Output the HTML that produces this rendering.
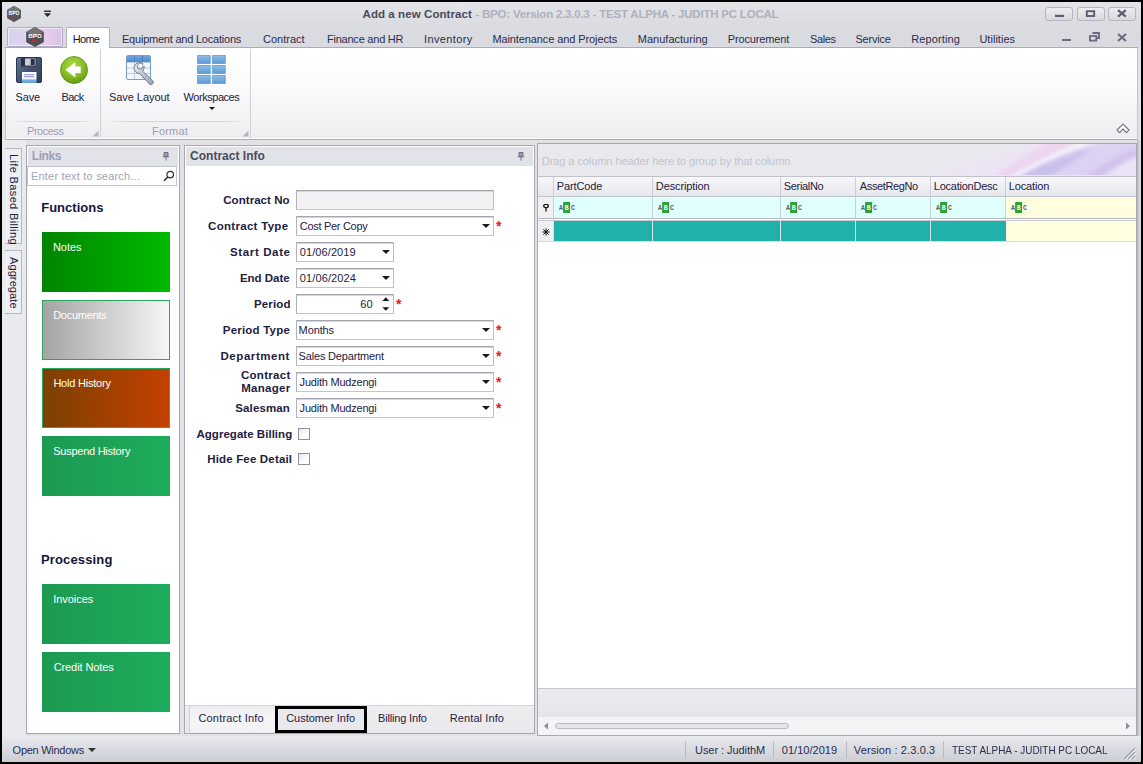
<!DOCTYPE html>
<html>
<head>
<meta charset="utf-8">
<title>Add a new Contract</title>
<style>
*{box-sizing:border-box;margin:0;padding:0}
html,body{width:1143px;height:764px;overflow:hidden;background:#e1e2e6}
body{font-family:"Liberation Sans",sans-serif;font-size:11px;color:#1e2140;position:relative}
.abs{position:absolute}
span,div{white-space:nowrap}
#frame{position:absolute;left:0;top:0;width:1143px;height:764px;box-shadow:inset 0 0 0 2px #000;z-index:99}
/* title bar */
#title{position:absolute;left:2px;top:2px;width:1139px;height:25px;background:linear-gradient(#e3e4e8,#dadbe0)}
#title .cap{position:absolute;top:6px;font-size:11.5px;font-weight:bold;color:#aeb0be}
.wbtn{position:absolute;top:5px;width:28px;height:14px;border:1px solid #b4b5be;border-radius:3px;background:linear-gradient(#ededf1,#d8d9de)}
/* tab row */
#tabs{position:absolute;left:2px;top:27px;width:1139px;height:21px;background:#dadbe0}
#tabs span{position:absolute;top:6px;color:#2a2d4c;font-size:11px}
#tabline{position:absolute;left:5px;top:47px;width:1133px;height:1px;background:#a9abb6}
#appbtn{position:absolute;left:7px;top:27px;width:56px;height:20px;border:1px solid #b0aec2;border-radius:2px;box-shadow:inset 0 0 0 1px rgba(255,255,255,.55);background:linear-gradient(90deg,#d6d2ee 0%,#e2d4ee 45%,#e6cdea 70%,#d9c4e8 100%)}
#hometab{position:absolute;left:66px;top:27px;width:44px;height:22px;background:#fff;border:1px solid #b0b2bd;border-bottom:none;border-radius:2px 2px 0 0}
/* ribbon */
#ribbon{position:absolute;left:5px;top:48px;width:1133px;height:92px;background:linear-gradient(#ffffff 0%,#fcfcfd 35%,#eeeef2 100%);border:1px solid #a9abb6;border-left-color:#c4c6ce;border-right-color:#c4c6ce;border-top:none;box-shadow:inset 0 -1px 0 #fff}
.rsep{position:absolute;top:49px;width:1px;height:89px;background:#cfd0d8}
.rlbl{position:absolute;top:91px;font-size:11px;color:#1e2140}
.gcap{position:absolute;top:125px;font-size:11px;color:#9c9eb0}
/* workspace */
.panel{position:absolute;border:1px solid #a6a8b6;background:#fff}
.phead{position:absolute;background:#e2e3e8;font-weight:bold;font-size:12px;letter-spacing:.1px}
.tile{position:absolute;left:42px;width:128px;height:60px;color:#fff;font-size:11px}
.tile span{position:absolute;left:11px;top:9px}
.flbl{position:absolute;right:853px;font-weight:bold;font-size:11.5px;letter-spacing:.2px;color:#1e2140;text-align:right;line-height:13px}
.fin{position:absolute;left:296px;width:198px;height:20px;border:1px solid;border-color:#a4a6b2 #bcbec8 #c2c4ce #b0b2be;background:#fff;font-size:11px;color:#1e2140;padding:3px 0 0 3px;box-shadow:inset 0 1px 0 #d4d5dc}
.dd{position:absolute;width:0;height:0;border-left:4px solid transparent;border-right:4px solid transparent;border-top:4px solid #1a1a1a}
.req{position:absolute;color:#f0141e;font-weight:bold;font-size:14px;line-height:14px}
.cb{position:absolute;left:298px;width:12px;height:12px;border:1px solid #8e90a0;background:linear-gradient(135deg,#e6e6ea,#fff 60%)}
/* grid */
.gh{position:absolute;top:177px;height:20px;border-right:1px solid #cdcfd8;border-bottom:1px solid #c0c2cc;background:linear-gradient(#f8f8fa,#e6e7ec);font-size:11px;padding:3px 0 0 4px;color:#1e2140}
.gf{position:absolute;top:197px;height:21px;border-right:1px solid #c6d4d8;background:#e0ffff}
.gn{position:absolute;top:221px;height:20px;border-right:1px solid #d8e8e8;background:#20b2aa}
.abc{position:absolute;top:5px;left:5px}
/* status */
#status{position:absolute;left:2px;top:736px;width:1139px;height:26px;background:linear-gradient(#e9eaed,#dcdde2 45%,#cdced4);font-size:11px;color:#2a2d4c}
#status span{position:absolute;top:8px}
#status i{position:absolute;top:5px;width:1px;height:17px;background:#b8bac4}
</style>
</head>
<body>
<!-- TITLE -->
<div id="title">
  <span class="cap" style="left:360.5px;color:#4a4b5c;letter-spacing:.08px">Add a new Contract</span><span class="cap" style="left:473.4px;letter-spacing:-0.21px">- BPO: Version 2.3.0.3 - TEST ALPHA - JUDITH PC LOCAL</span>
  <div class="wbtn" style="left:1043px"></div>
  <div class="wbtn" style="left:1075px"></div>
  <div class="wbtn" style="left:1106px"></div>
</div>
<!-- TABS -->
<div id="tabs">
  <span style="left:120.0px;letter-spacing:-0.22px">Equipment and Locations</span>
  <span style="left:261px">Contract</span>
  <span style="left:325.0px;letter-spacing:-0.23px">Finance and HR</span>
  <span style="left:422.0px;letter-spacing:0.39px">Inventory</span>
  <span style="left:490.4px;letter-spacing:-0.1px">Maintenance and Projects</span>
  <span style="left:635.8px;letter-spacing:0.01px">Manufacturing</span>
  <span style="left:725.8px;letter-spacing:-0.15px">Procurement</span>
  <span style="left:808.0px;letter-spacing:-0.37px">Sales</span>
  <span style="left:853.4px;letter-spacing:-0.18px">Service</span>
  <span style="left:909.2px;letter-spacing:0.12px">Reporting</span>
  <span style="left:977.4px;letter-spacing:0.03px">Utilities</span>
</div>
<div id="tabline"></div>
<div id="appbtn"></div>
<div id="hometab"></div>
<span class="abs" style="left:72.8px;top:33px;color:#14163a;font-size:11px;letter-spacing:-0.73px">Home</span>
<!-- RIBBON -->
<div id="ribbon"></div>
<div class="rsep" style="left:100px"></div>
<div class="rsep" style="left:250px"></div>
<span class="rlbl" style="left:15.6px;letter-spacing:-0.18px">Save</span>
<span class="rlbl" style="left:61.4px;letter-spacing:-0.54px">Back</span>
<span class="rlbl" style="left:109.0px;letter-spacing:-0.06px">Save Layout</span>
<span class="rlbl" style="left:183.6px;letter-spacing:-0.46px">Workspaces</span>
<div class="dd" style="left:208.5px;top:107px;border-left-width:3px;border-right-width:3px;border-top-width:3.5px"></div>
<span class="gcap" style="left:27.0px;letter-spacing:-0.46px">Process</span>
<span class="gcap" style="left:152.0px;letter-spacing:0.18px">Format</span>
<!-- save icon -->
<svg class="abs" style="left:16px;top:57px" width="26" height="26" viewBox="0 0 26 26">
  <defs><linearGradient id="sv1" x1="0" y1="0" x2="1" y2="1"><stop offset="0" stop-color="#62799c"/><stop offset=".5" stop-color="#42536f"/><stop offset="1" stop-color="#303c56"/></linearGradient>
  <linearGradient id="sv2" x1="0" y1="0" x2="0" y2="1"><stop offset="0" stop-color="#ffffff"/><stop offset=".65" stop-color="#f2f6fb"/><stop offset=".7" stop-color="#7fb6e2"/><stop offset="1" stop-color="#5aa0d8"/></linearGradient></defs>
  <rect x="0.5" y="0.5" width="25" height="25" rx="1.5" fill="url(#sv1)" stroke="#2a3650"/>
  <rect x="5" y="0.5" width="15.5" height="9" fill="#2b3046"/>
  <rect x="9" y="1.5" width="10.5" height="7" fill="#c9d0dc"/>
  <rect x="14.7" y="2" width="4" height="6" fill="#2b3046"/>
  <rect x="6" y="15" width="14.5" height="11" fill="url(#sv2)"/>
  <rect x="8" y="17.2" width="10" height="1" fill="#8c8cd0"/><rect x="8" y="19.2" width="10" height="1" fill="#8c8cd0"/>
</svg>
<!-- back icon -->
<svg class="abs" style="left:60px;top:56px" width="28" height="28" viewBox="0 0 28 28">
  <defs><radialGradient id="bk1" cx=".45" cy=".3" r=".75"><stop offset="0" stop-color="#a6d63a"/><stop offset=".6" stop-color="#86bc22"/><stop offset="1" stop-color="#5f9414"/></radialGradient></defs>
  <circle cx="14" cy="14" r="13.5" fill="url(#bk1)" stroke="#5c8c18" stroke-width=".8"/>
  <path d="M5.5 13.8 L15.2 6.4 L15.2 10.6 L20.6 10.6 L20.6 17 L15.2 17 L15.2 21.2 Z" fill="#fff" stroke="#e8f2d0" stroke-width=".5"/>
</svg>
<!-- save layout icon -->
<svg class="abs" style="left:126px;top:55px" width="30" height="30" viewBox="0 0 30 30">
  <defs><linearGradient id="sl1" x1="0" y1="0" x2="0" y2="1"><stop offset="0" stop-color="#6ea6dc"/><stop offset="1" stop-color="#4d8ccc"/></linearGradient>
  <linearGradient id="sl2" x1="0" y1="0" x2="1" y2="1"><stop offset="0" stop-color="#e8ebf0"/><stop offset="1" stop-color="#9aa3b2"/></linearGradient></defs>
  <rect x="0.5" y="0.5" width="24" height="24" rx="1.5" fill="#f3f7fc" stroke="#7a9acc"/>
  <rect x="1" y="1" width="23" height="6" fill="url(#sl1)"/>
  <path d="M8.5 1 V24 M16.5 1 V24 M1 7.5 H24 M1 13 H24 M1 18.5 H24" stroke="#b8cce6" stroke-width="1" fill="none"/>
  <path d="M8.5 1 V7 M16.5 1 V7" stroke="#4a80c0" stroke-width="1"/>
  <g transform="translate(-1.2,-0.6) scale(1.08)"><path d="M17 9 a5 5 0 1 0 -3.2 8.6 l8.8 9.6 a2 2 0 0 0 3.2 -2.8 l-9.4 -9 a5 5 0 0 0 1.4 -4.6 l-2.8 2.8 l-2.8 -0.8 l-0.6 -2.6 l2.6 -2.6 z" fill="url(#sl2)" stroke="#6f7a8e" stroke-width=".9"/></g>
</svg>
<!-- workspaces icon -->
<svg class="abs" style="left:197px;top:55px" width="29" height="29" viewBox="0 0 29 29">
  <defs><linearGradient id="ws1" x1="0" y1="0" x2="0" y2="1"><stop offset="0" stop-color="#8fbde8"/><stop offset="1" stop-color="#5c9bd6"/></linearGradient></defs>
  <g fill="url(#ws1)" stroke="#5a98d4" stroke-width=".8">
  <rect x="0.6" y="0.6" width="12.6" height="7.8"/><rect x="15.6" y="0.6" width="12.6" height="7.8"/>
  <rect x="0.6" y="10.6" width="12.6" height="7.8"/><rect x="15.6" y="10.6" width="12.6" height="7.8"/>
  <rect x="0.6" y="20.6" width="12.6" height="7.8"/><rect x="15.6" y="20.6" width="12.6" height="7.8"/></g>
</svg>
<div class="abs" style="left:10px;top:121px;width:86px;height:1px;background:linear-gradient(90deg,rgba(214,215,222,0),#d6d7de 20%,#d6d7de 80%,rgba(214,215,222,0))"></div>
<div class="abs" style="left:105px;top:121px;width:141px;height:1px;background:linear-gradient(90deg,rgba(214,215,222,0),#d6d7de 15%,#d6d7de 85%,rgba(214,215,222,0))"></div>
<!-- group corner marks -->
<svg class="abs" style="left:92px;top:130px" width="7" height="7" viewBox="0 0 7 7"><path d="M6.5 0.5 V6.5 H0.5 Z" fill="#b4b6c2"/></svg>
<svg class="abs" style="left:242px;top:130px" width="7" height="7" viewBox="0 0 7 7"><path d="M6.5 0.5 V6.5 H0.5 Z" fill="#b4b6c2"/></svg>
<!-- ribbon collapse -->
<svg class="abs" style="left:1116px;top:123px" width="14" height="11" viewBox="0 0 14 11"><path d="M7 1.2 L13 7 L10.5 9.6 L7 6 L3.5 9.6 L1 7 Z" fill="#fff" stroke="#6c6e7e" stroke-width="1.1" stroke-linejoin="round"/></svg>
<!-- title logo -->
<svg class="abs" style="left:7px;top:6px" width="14" height="16" viewBox="0 0 14 16">
  <path d="M7 0.3 L13.6 4 L13.6 12 L7 15.7 L0.4 12 L0.4 4 Z" fill="#58585c" stroke="#3c3c40" stroke-width=".6"/>
  <path d="M7 0.3 L13.6 4 L7 7.5 L0.4 4 Z" fill="#77777c"/>
  <text x="7" y="9.2" text-anchor="middle" font-family="Liberation Sans, sans-serif" font-size="5" font-weight="bold" fill="#fff">BPO</text>
  <rect x="5" y="10.6" width="2.4" height="1.6" fill="#c03038"/>
</svg>
<svg class="abs" style="left:43px;top:10px" width="9" height="8" viewBox="0 0 9 8"><rect x="1" y="0.6" width="7" height="1.3" fill="#1e2030"/><path d="M1 3.2 H8 L4.5 7 Z" fill="#1e2030"/></svg>
<!-- app button logo -->
<svg class="abs" style="left:26px;top:27px" width="18" height="20" viewBox="0 0 18 20">
  <path d="M9 0.4 L17.4 5 L17.4 15 L9 19.6 L0.6 15 L0.6 5 Z" fill="#505054" stroke="#38383c" stroke-width=".6"/>
  <path d="M9 0.4 L17.4 5 L9 9.4 L0.6 5 Z" fill="#737378"/>
  <text x="9" y="11.4" text-anchor="middle" font-family="Liberation Sans, sans-serif" font-size="6.2" font-weight="bold" fill="#fff">BPO</text>
  <rect x="6" y="13" width="3.2" height="2" fill="#c03038"/>
</svg>
<!-- window button glyphs -->
<svg class="abs" style="left:1045px;top:7px" width="92" height="14" viewBox="0 0 92 14">
  <rect x="10" y="7.8" width="9" height="2.2" fill="#5c5d70"/>
  <rect x="41.8" y="4.2" width="7.4" height="4.8" fill="none" stroke="#5c5d70" stroke-width="1.9"/>
  <path d="M73 3.2 L80.8 9.6 M80.8 3.2 L73 9.6" stroke="#5c5d70" stroke-width="2.2"/>
</svg>
<svg class="abs" style="left:1058px;top:31px" width="72" height="12" viewBox="0 0 72 12">
  <rect x="4" y="8" width="9" height="2" fill="#6a6b7e"/>
  <path d="M34.5 2 H41 V7 H39" fill="none" stroke="#6a6b7e" stroke-width="1.8"/>
  <rect x="31.9" y="5" width="6.4" height="4.6" fill="none" stroke="#6a6b7e" stroke-width="1.8"/>
  <path d="M60 3 L68 10 M68 3 L60 10" stroke="#6a6b7e" stroke-width="2.1"/>
</svg>

<!-- SIDE TABS -->
<div class="abs" style="left:2px;top:140px;width:24px;height:596px;background:#e9eaed"></div>
<div class="abs" style="left:5px;top:148px;width:17px;height:96px;background:#eeeff2;border:1px solid #b6b8c4;border-left:none"></div>
<div class="abs" style="left:5px;top:250px;width:17px;height:64px;background:#eeeff2;border:1px solid #b6b8c4;border-left:none"></div>
<div class="abs" style="left:20px;top:154px;width:0;height:0"><span class="abs" style="left:0;top:0;transform-origin:0 0;transform:rotate(90deg);font-size:11px;color:#1e2140;letter-spacing:.36px">Life Based Billing</span></div>
<div class="abs" style="left:20px;top:257px;width:0;height:0"><span class="abs" style="left:0;top:0;transform-origin:0 0;transform:rotate(90deg);font-size:11px;color:#1e2140;letter-spacing:.1px">Aggregate</span></div>

<!-- LINKS PANEL -->
<div class="panel" style="left:26px;top:145px;width:154px;height:589px"></div>
<div class="phead" style="left:28px;top:147px;width:150px;height:19px"><span class="abs" style="left:3.8px;top:2px;color:#9a9eb6;letter-spacing:-0.43px">Links</span></div>
<div class="abs" style="left:27.0px;top:166px;width:150px;height:20px;border:1px solid #c2c4ce;background:#fff;color:#a2a4b6;padding:3px 0 0 3px;letter-spacing:0.2px">Enter text to search...</div>
<div class="abs" style="left:41.2px;top:200px;font-weight:bold;font-size:13px;color:#14163a;letter-spacing:0.02px">Functions</div>
<div class="tile" style="top:232px;background:linear-gradient(90deg,#008400,#00bc00)"><span style="letter-spacing:-0.07px;text-indent:0.0px">Notes</span></div>
<div class="tile" style="top:300px;background:linear-gradient(90deg,#a4a4a4,#f6f6f6);border:1px solid #2aa860"><span style="left:10.2px;top:8px;letter-spacing:-0.28px">Documents</span></div>
<div class="tile" style="top:368px;background:linear-gradient(90deg,#7c4000,#c44000);border:1px solid #2aa860"><span style="left:10.4px;top:8px;letter-spacing:-0.21px">Hold History</span></div>
<div class="tile" style="top:436px;background:linear-gradient(90deg,#1c9a52,#1eac5c)"><span style="letter-spacing:-0.25px;text-indent:0.2px">Suspend History</span></div>
<div class="abs" style="left:41.0px;top:552px;font-weight:bold;font-size:13px;color:#14163a;letter-spacing:0.14px">Processing</div>
<div class="tile" style="top:584px;background:linear-gradient(90deg,#1c9a52,#1eac5c)"><span style="letter-spacing:-0.04px;text-indent:0.2px">Invoices</span></div>
<div class="tile" style="top:652px;background:linear-gradient(90deg,#1c9a52,#1eac5c)"><span style="letter-spacing:-0.1px;text-indent:0.7px">Credit Notes</span></div>

<!-- CONTRACT INFO PANEL -->
<div class="panel" style="left:184px;top:145px;width:351px;height:589px"></div>
<div class="phead" style="left:186px;top:147px;width:347px;height:19px"><span class="abs" style="left:4.0px;top:2px;color:#4a4b5c;letter-spacing:0.02px">Contract Info</span></div>
<div class="flbl" style="top:194px;letter-spacing:0.05px;right:853.4px">Contract No</div>
<div class="fin" style="top:190px;background:#f2f2f5"></div>
<div class="flbl" style="top:220px;letter-spacing:0.3px;right:854.6px">Contract Type</div>
<div class="fin" style="top:216px;letter-spacing:-0.3px;text-indent:-0.2px">Cost Per Copy</div><div class="dd" style="left:482px;top:224px"></div><div class="req" style="left:496px;top:219px">*</div>
<div class="flbl" style="top:246px;letter-spacing:0.62px;right:852.4px">Start Date</div>
<div class="fin" style="top:242px;width:98px;letter-spacing:0.08px;text-indent:-0.2px">01/06/2019</div><div class="dd" style="left:382px;top:250px"></div>
<div class="flbl" style="top:272px;letter-spacing:-0.02px;right:853.4px">End Date</div>
<div class="fin" style="top:268px;width:98px;letter-spacing:0.12px;text-indent:-0.2px">01/06/2024</div><div class="dd" style="left:382px;top:276px"></div>
<div class="flbl" style="top:298px;letter-spacing:0.14px;right:852.4px">Period</div>
<div class="fin" style="top:294px;width:98px;text-align:right;padding-right:20.4px;letter-spacing:0.0px">60</div>
<svg class="abs" style="left:382px;top:296px" width="8" height="16" viewBox="0 0 8 16"><path d="M0.3 5 L3.8 1.3 L7.3 5 Z M0.3 11.2 L3.8 14.8 L7.3 11.2 Z" fill="#1a1a1a"/></svg>
<div class="req" style="left:396px;top:297px">*</div>
<div class="flbl" style="top:324px;letter-spacing:0.2px;right:853.0px">Period Type</div>
<div class="fin" style="top:320px;letter-spacing:-0.12px;text-indent:-1.4px">Months</div><div class="dd" style="left:482px;top:328px"></div><div class="req" style="left:496px;top:323px">*</div>
<div class="flbl" style="top:350px;letter-spacing:0.56px;right:853.0px">Department</div>
<div class="fin" style="top:346px;letter-spacing:-0.18px;text-indent:-1.4px">Sales Department</div><div class="dd" style="left:482px;top:354px"></div><div class="req" style="left:496px;top:349px">*</div>
<div class="flbl" style="top:369px;letter-spacing:.3px;right:852.4px">Contract<br>Manager</div>
<div class="fin" style="top:372px;letter-spacing:-0.22px;text-indent:-0.4px">Judith Mudzengi</div><div class="dd" style="left:482px;top:380px"></div><div class="req" style="left:496px;top:375px">*</div>
<div class="flbl" style="top:402px;letter-spacing:0.13px;right:853.0px">Salesman</div>
<div class="fin" style="top:398px;letter-spacing:-0.22px;text-indent:-0.4px">Judith Mudzengi</div><div class="dd" style="left:482px;top:406px"></div><div class="req" style="left:496px;top:401px">*</div>
<div class="flbl" style="top:428px;right:850.8px;letter-spacing:0.03px">Aggregate Billing</div>
<div class="cb" style="top:428px"></div>
<div class="flbl" style="top:453px;right:850.8px;letter-spacing:0.17px">Hide Fee Detail</div>
<div class="cb" style="top:453px"></div>
<!-- bottom tabs -->
<div class="abs" style="left:185px;top:705px;width:349px;height:28px;background:linear-gradient(#eeeef1,#e9e9ed);border-top:1px solid #d4d5dc"></div>
<div class="abs" style="left:189px;top:706px;width:86px;height:26px;background:linear-gradient(#ececf0,#f5f5f7 40%,#f3f3f6);border-left:1px solid #cfd0d8"></div>
<div class="abs" style="left:275px;top:706px;width:92px;height:27px;border:3px solid #000;background:#e9e9ed"></div>
<span class="abs" style="left:198.4px;top:712px;color:#1e2140;letter-spacing:0.19px">Contract Info</span>
<span class="abs" style="left:286.2px;top:712px;color:#1e2140;letter-spacing:-0.02px">Customer Info</span>
<span class="abs" style="left:378.0px;top:712px;color:#1e2140;letter-spacing:-0.16px">Billing Info</span>
<span class="abs" style="left:449.8px;top:712px;color:#1e2140;letter-spacing:0.09px">Rental Info</span>

<!-- GRID PANEL -->
<div class="panel" style="left:537px;top:143px;width:600px;height:593px;background:#fff"></div>
<div class="abs" id="grp" style="left:538px;top:144px;width:598px;height:33px;background:#e9e9ed;border-bottom:1px solid #c0c2cc;overflow:hidden">
  <svg class="abs" style="left:340px;top:0" width="258" height="31" viewBox="0 0 258 31">
    <defs><filter id="bl" x="-10%" y="-30%" width="120%" height="160%"><feGaussianBlur stdDeviation="2.2"/></filter>
    <filter id="bl2" x="-10%" y="-30%" width="120%" height="160%"><feGaussianBlur stdDeviation="5"/></filter></defs>
    <path d="M40 34 C90 20 130 8 170 -4 L262 -4 L262 34 Z" fill="#ece4f4" filter="url(#bl2)"/>
    <path d="M112 34 C135 20 150 10 172 -3 L200 -3 C175 10 150 22 128 34 Z" fill="#ecd6f0" filter="url(#bl)"/>
    <path d="M132 34 C155 20 180 8 205 -3 L222 -3 C195 10 170 22 146 34 Z" fill="#f6f2fa" filter="url(#bl)"/>
    <path d="M140 34 C165 18 195 6 225 -2 L262 -2 L262 34 Z" fill="#dcd2f2" filter="url(#bl)"/>
    <path d="M140 34 C165 20 190 10 215 4 C200 14 185 24 170 34 Z" fill="#c9bfec" filter="url(#bl)"/>
    <path d="M205 34 C222 22 238 12 258 4 L262 10 C245 18 232 26 222 34 Z" fill="#d2c2ec" filter="url(#bl)"/>
    <path d="M225 34 C238 25 248 18 262 12 L262 34 Z" fill="#ebe4f6" filter="url(#bl)"/>
  </svg>
  <span class="abs" style="left:3.8px;top:11px;color:#c2c4ce;font-size:11px;letter-spacing:-0.07px">Drag a column header here to group by that column</span>
</div>
<!-- header row -->
<div class="gh" style="left:538px;width:16px"></div>
<div class="gh" style="left:554px;width:99px;letter-spacing:-0.13px;text-indent:-1.2px">PartCode</div>
<div class="gh" style="left:653px;width:128px;letter-spacing:-0.12px;text-indent:-1.2px">Description</div>
<div class="gh" style="left:781px;width:75px;letter-spacing:-0.34px;text-indent:-1.2px">SerialNo</div>
<div class="gh" style="left:856px;width:75px;letter-spacing:-0.38px;text-indent:-0.2px">AssetRegNo</div>
<div class="gh" style="left:931px;width:75px;letter-spacing:-0.24px;text-indent:-1.2px">LocationDesc</div>
<div class="gh" style="left:1006px;width:130px;border-right:none;letter-spacing:-0.16px;text-indent:-1.2px">Location</div>
<!-- filter row -->
<div class="gf" style="left:538px;width:16px;background:#f0f0f3"><svg class="abs" style="left:5px;top:7px" width="6" height="8" viewBox="0 0 6 8"><ellipse cx="3" cy="2" rx="2.3" ry="1.6" fill="#fff" stroke="#111" stroke-width="1.3"/><path d="M3 3.4 V7.6" stroke="#111" stroke-width="1.3"/></svg></div>
<div class="gf" style="left:554px;width:99px"><svg class="abc" width="16" height="11" viewBox="0 0 16 11"><rect x="4.1" y="0" width="7" height="11" rx=".6" fill="#2ea036"/><text x="0" y="8.2" font-family="Liberation Mono, monospace" font-size="6.5" font-weight="bold" fill="#5a5c66">A</text><text x="5.7" y="8.2" font-family="Liberation Mono, monospace" font-size="6.5" font-weight="bold" fill="#fff">B</text><text x="12" y="8.2" font-family="Liberation Mono, monospace" font-size="6.5" font-weight="bold" fill="#5a5c66">C</text></svg></div>
<div class="gf" style="left:653px;width:128px"><svg class="abc" width="16" height="11" viewBox="0 0 16 11"><rect x="4.1" y="0" width="7" height="11" rx=".6" fill="#2ea036"/><text x="0" y="8.2" font-family="Liberation Mono, monospace" font-size="6.5" font-weight="bold" fill="#5a5c66">A</text><text x="5.7" y="8.2" font-family="Liberation Mono, monospace" font-size="6.5" font-weight="bold" fill="#fff">B</text><text x="12" y="8.2" font-family="Liberation Mono, monospace" font-size="6.5" font-weight="bold" fill="#5a5c66">C</text></svg></div>
<div class="gf" style="left:781px;width:75px"><svg class="abc" width="16" height="11" viewBox="0 0 16 11"><rect x="4.1" y="0" width="7" height="11" rx=".6" fill="#2ea036"/><text x="0" y="8.2" font-family="Liberation Mono, monospace" font-size="6.5" font-weight="bold" fill="#5a5c66">A</text><text x="5.7" y="8.2" font-family="Liberation Mono, monospace" font-size="6.5" font-weight="bold" fill="#fff">B</text><text x="12" y="8.2" font-family="Liberation Mono, monospace" font-size="6.5" font-weight="bold" fill="#5a5c66">C</text></svg></div>
<div class="gf" style="left:856px;width:75px"><svg class="abc" width="16" height="11" viewBox="0 0 16 11"><rect x="4.1" y="0" width="7" height="11" rx=".6" fill="#2ea036"/><text x="0" y="8.2" font-family="Liberation Mono, monospace" font-size="6.5" font-weight="bold" fill="#5a5c66">A</text><text x="5.7" y="8.2" font-family="Liberation Mono, monospace" font-size="6.5" font-weight="bold" fill="#fff">B</text><text x="12" y="8.2" font-family="Liberation Mono, monospace" font-size="6.5" font-weight="bold" fill="#5a5c66">C</text></svg></div>
<div class="gf" style="left:931px;width:75px"><svg class="abc" width="16" height="11" viewBox="0 0 16 11"><rect x="4.1" y="0" width="7" height="11" rx=".6" fill="#2ea036"/><text x="0" y="8.2" font-family="Liberation Mono, monospace" font-size="6.5" font-weight="bold" fill="#5a5c66">A</text><text x="5.7" y="8.2" font-family="Liberation Mono, monospace" font-size="6.5" font-weight="bold" fill="#fff">B</text><text x="12" y="8.2" font-family="Liberation Mono, monospace" font-size="6.5" font-weight="bold" fill="#5a5c66">C</text></svg></div>
<div class="gf" style="left:1006px;width:130px;background:#ffffe0;border-right:none"><svg class="abc" width="16" height="11" viewBox="0 0 16 11"><rect x="4.1" y="0" width="7" height="11" rx=".6" fill="#2ea036"/><text x="0" y="8.2" font-family="Liberation Mono, monospace" font-size="6.5" font-weight="bold" fill="#5a5c66">A</text><text x="5.7" y="8.2" font-family="Liberation Mono, monospace" font-size="6.5" font-weight="bold" fill="#fff">B</text><text x="12" y="8.2" font-family="Liberation Mono, monospace" font-size="6.5" font-weight="bold" fill="#5a5c66">C</text></svg></div>
<div class="abs" style="left:538px;top:218px;width:598px;height:3px;background:#fff;border-top:1px solid #b4b6c2;border-bottom:1px solid #c8cad4"></div>
<!-- new row -->
<div class="gn" style="left:538px;width:16px;background:#f0f0f3"><svg class="abs" style="left:4px;top:7px" width="8" height="8" viewBox="0 0 8 8"><path d="M4 0.3 V7.7 M0.3 4 H7.7 M1.3 1.3 L6.7 6.7 M6.7 1.3 L1.3 6.7" stroke="#111" stroke-width="1"/></svg></div>
<div class="gn" style="left:554px;width:99px"></div>
<div class="gn" style="left:653px;width:128px"></div>
<div class="gn" style="left:781px;width:75px"></div>
<div class="gn" style="left:856px;width:75px"></div>
<div class="gn" style="left:931px;width:75px;border-right:none"></div>
<div class="gn" style="left:1006px;width:130px;background:#ffffe0;border-right:none"></div>
<div class="abs" style="left:538px;top:241px;width:598px;height:1px;background:#d8dae2"></div>
<!-- footer + scrollbar -->
<div class="abs" style="left:538px;top:688px;width:598px;height:30px;background:linear-gradient(#ececf0,#e4e5e9);border-top:1px solid #c4c6d0"></div>
<div class="abs" style="left:538px;top:717px;width:598px;height:18px;background:#f4f4f6"></div>
<div class="abs" style="left:555px;top:723px;width:234px;height:6px;border:1px solid #b8bac4;border-radius:3px;background:#e4e5ea"></div>
<svg class="abs" style="left:543px;top:722px" width="6" height="8" viewBox="0 0 6 8"><path d="M5 0.5 L1 4 L5 7.5Z" fill="#8a8c9a"/></svg>
<svg class="abs" style="left:1125px;top:722px" width="6" height="8" viewBox="0 0 6 8"><path d="M1 0.5 L5 4 L1 7.5Z" fill="#8a8c9a"/></svg>

<!-- pins -->
<svg class="abs" style="left:162px;top:152px" width="8" height="9" viewBox="0 0 8 9"><path d="M2 0.5 H6 V4.5 H2 Z M0.8 4.8 H7.2 M4 5 V8.6" fill="#9a9cae" stroke="#6e7084" stroke-width="1"/></svg>
<svg class="abs" style="left:517px;top:152px" width="8" height="9" viewBox="0 0 8 9"><path d="M2 0.5 H6 V4.5 H2 Z M0.8 4.8 H7.2 M4 5 V8.6" fill="#9a9cae" stroke="#6e7084" stroke-width="1"/></svg>
<!-- search glyph -->
<svg class="abs" style="left:163px;top:170px;z-index:5" width="12" height="12" viewBox="0 0 12 12"><circle cx="7.2" cy="4.6" r="3.3" fill="none" stroke="#2e3040" stroke-width="1.2"/><path d="M4.8 7 L1 10.8" stroke="#2e3040" stroke-width="1.6"/></svg>

<!-- STATUS -->
<div id="status">
  <span style="left:10.6px;letter-spacing:-0.27px">Open Windows</span>
  <div class="dd" style="left:86px;top:12px;border-top-color:#333"></div>
  <i style="left:683px"></i><i style="left:771px"></i><i style="left:844px"></i><i style="left:941px"></i>
  <span style="left:693.0px;letter-spacing:-0.06px">User : JudithM</span>
  <span style="left:779.8px;letter-spacing:0.02px">01/10/2019</span>
  <span style="left:851.8px;letter-spacing:0.12px">Version : 2.3.0.3</span>
  <span style="left:950.4px;letter-spacing:0;transform:scaleX(.903);transform-origin:0 0">TEST ALPHA - JUDITH PC LOCAL</span>
</div>
<div class="abs" style="left:1137px;top:140px;width:4px;height:596px;background:linear-gradient(90deg,#aeb0bc,#c9cad1 40%,#dfe0e4)"></div>
<svg class="abs" style="left:1122px;top:746px" width="14" height="14" viewBox="0 0 14 14"><path d="M13 2 L2 13 M13 6 L6 13 M13 10 L10 13" stroke="#9c9eac" stroke-width="1.2"/><path d="M14 3 L3 14 M14 7 L7 14 M14 11 L11 14" stroke="#f4f4f6" stroke-width="1"/></svg>
<div id="frame"></div>
</body>
</html>
